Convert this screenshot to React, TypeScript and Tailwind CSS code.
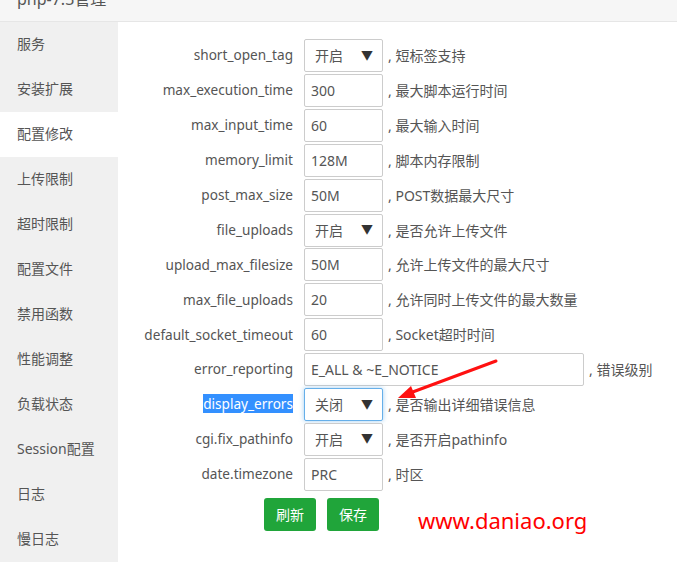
import React from "react";

const font = { fontFamily: '"Noto Sans", "Noto Sans CJK SC", sans-serif' };

const menu = ["服务", "安装扩展", "配置修改", "上传限制", "超时限制", "配置文件", "禁用函数", "性能调整", "负载状态", "Session配置", "日志", "慢日志"];

type Row = { label: string; kind: "input" | "select"; value: string; note: string; wide?: boolean; focus?: boolean; sel?: boolean };

const rows: Row[] = [
  { label: "short_open_tag", kind: "select", value: "开启", note: "短标签支持" },
  { label: "max_execution_time", kind: "input", value: "300", note: "最大脚本运行时间" },
  { label: "max_input_time", kind: "input", value: "60", note: "最大输入时间" },
  { label: "memory_limit", kind: "input", value: "128M", note: "脚本内存限制" },
  { label: "post_max_size", kind: "input", value: "50M", note: "POST数据最大尺寸" },
  { label: "file_uploads", kind: "select", value: "开启", note: "是否允许上传文件" },
  { label: "upload_max_filesize", kind: "input", value: "50M", note: "允许上传文件的最大尺寸" },
  { label: "max_file_uploads", kind: "input", value: "20", note: "允许同时上传文件的最大数量" },
  { label: "default_socket_timeout", kind: "input", value: "60", note: "Socket超时时间" },
  { label: "error_reporting", kind: "input", value: "E_ALL & ~E_NOTICE", note: "错误级别", wide: true },
  { label: "display_errors", kind: "select", value: "关闭", note: "是否输出详细错误信息", focus: true, sel: true },
  { label: "cgi.fix_pathinfo", kind: "select", value: "开启", note: "是否开启pathinfo" },
  { label: "date.timezone", kind: "input", value: "PRC", note: "时区" },
];

export default function App() {
  return (
    <div className="relative w-[677px] h-[562px] overflow-hidden bg-white flex flex-col text-[14px] text-[#555]" style={font}>
      <div className="h-[22px] shrink-0 bg-[#f6f6f6] border-b border-[#e6e6e6] overflow-hidden">
        <div className="mt-[-11px] ml-[17px] text-[16px] leading-[20px] text-[#555]">php-7.3管理</div>
      </div>
      <div className="flex flex-1 min-h-0">
        <div className="w-[118px] shrink-0 bg-[#f0f0f0] flex flex-col">
          {menu.map((m) => (
            <div key={m} className={`h-[45px] shrink-0 flex items-center pl-[17px] pb-[2px] ${m === "配置修改" ? "bg-white" : ""}`}>
              {m}
            </div>
          ))}
        </div>
        <div className="flex-1 pt-[17px] flex flex-col">
          <div className="flex flex-col gap-[1.92px]">
            {rows.map((r) => (
              <div key={r.label} className="flex items-center h-[33px]">
                <div className="w-[175px] text-right shrink-0 text-[13.6px]">
                  {r.sel ? <span className="bg-[#3390ff] text-white">{r.label}</span> : r.label}
                </div>
                <div
                  className={`ml-[11px] h-[33px] shrink-0 flex items-center justify-between bg-white rounded-[2px] border ${
                    r.focus ? "border-[#66afe9] shadow-[0_0_5px_rgba(102,175,233,0.6)]" : "border-[#ccc]"
                  } ${r.wide ? "w-[280px]" : "w-[79px]"} ${r.kind === "select" ? "pl-[10px] pr-[9px]" : "pl-[6px]"}`}
                >
                  <span>{r.value}</span>
                  {r.kind === "select" && <span className="text-[12px] text-[#333]">▼</span>}
                </div>
                <div className="ml-[5px] whitespace-nowrap">, {r.note}</div>
              </div>
            ))}
          </div>
          <div className="flex gap-[11px] ml-[146px] mt-[7px]">
            <button className="w-[52px] h-[33px] rounded-[3px] bg-[#20a53a] text-white text-[14px]">刷新</button>
            <button className="w-[52px] h-[33px] rounded-[3px] bg-[#20a53a] text-white text-[14px]">保存</button>
          </div>
        </div>
      </div>
      <div className="absolute left-[418px] top-[505px] text-[22px] leading-[30px] text-[#ff0000]" style={font}>
        www.daniao.org
      </div>
      <svg className="absolute left-0 top-0 pointer-events-none" width="677" height="562">
        <line x1="496" y1="361" x2="410" y2="393" stroke="#f11" strokeWidth="3" strokeLinecap="round" />
        <polygon points="398,398 416,398 411,386" fill="#f11" />
      </svg>
    </div>
  );
}
